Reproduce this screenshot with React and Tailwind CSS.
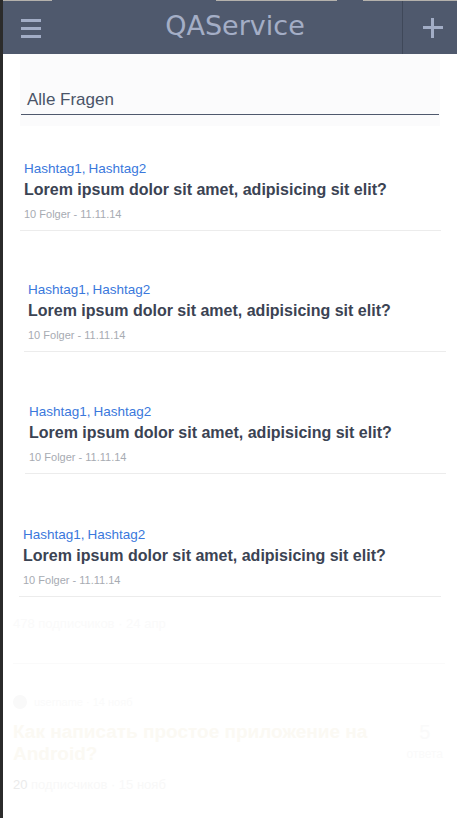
import React from "react";

const cards = [
  { wrap: "mt-[35px] ml-[17px] w-[421px]" },
  { wrap: "mt-[51px] ml-[21px] w-[422px]" },
  { wrap: "mt-[52px] ml-[22px] w-[421px]" },
  { wrap: "mt-[53px] ml-[16px] w-[422px]" },
];

function Card({ wrap }) {
  return (
    <div className={`${wrap} border-b border-[#ececec] pb-[9px] pl-[4px]`}>
      <div className="h-[16px] text-[13.5px] leading-[16px] text-[#3a78dc]">
        Hashtag1,<span className="ml-[3px]">Hashtag2</span>
      </div>
      <div className="mt-[3px] h-[20px] whitespace-nowrap text-[16px] font-bold leading-[20px] text-[#3b4353]">
        Lorem ipsum dolor sit amet, adipisicing sit elit?
      </div>
      <div className="mt-[7px] h-[14px] text-[11px] leading-[14px] text-[#a7abb2]">
        10 Folger - 11.11.14
      </div>
    </div>
  );
}

export default function App() {
  return (
    <div className="relative h-[818px] w-[457px] overflow-hidden border-l-[3px] border-[#2b2b2b] bg-white font-['Liberation_Sans',Arial,sans-serif]">
      <header className="flex h-[54px] flex-col bg-[#4f596d]">
        <div className="flex h-px">
          <span className="w-[49px] bg-[#b4b1ac]" />
          <span className="w-[164px]" />
          <span className="w-[121px] bg-[#b4b1ac]" />
          <span className="w-[26px]" />
          <span className="flex-1 bg-[#b4b1ac]" />
        </div>
        <div className="grid h-[53px] grid-cols-[54px_1fr_55px]">
          <div className="pl-[18px] pt-[18px]">
            <svg width="20" height="19" viewBox="0 0 20 19" fill="#a2adc6">
              <rect x="0" y="0" width="20" height="3" />
              <rect x="0" y="8" width="20" height="3" />
              <rect x="0" y="16" width="20" height="3" />
            </svg>
          </div>
          <div className="pl-[11px] pt-[9px] text-center font-['DejaVu_Sans',sans-serif] text-[27px] leading-[32px] text-[#a4aec6]">
            QAService
          </div>
          <div className="border-l border-[#3f4859] pl-[20px] pt-[17px]">
            <svg width="20" height="20" viewBox="0 0 20 20" fill="#a2adc6">
              <rect x="8" y="0" width="3" height="20" />
              <rect x="0" y="8" width="20" height="3" />
            </svg>
          </div>
        </div>
      </header>

      <div className="ml-[17px] h-[72px] w-[420px] bg-[#fbfbfc] pt-[36px]">
        <div className="mx-[1px] border-b border-[#4f596d] pb-[4px] pl-[6px] text-[17px] leading-[20px] text-[#4a5468]">
          Alle Fragen
        </div>
      </div>

      {cards.map((c, i) => (
        <Card key={i} wrap={c.wrap} />
      ))}

      <div className="ml-[10px] mt-[20px] text-[13px] leading-[14px] text-[#fafafa]">
        478 подписчиков · 24 апр
      </div>
      <div className="ml-[10px] mt-[32px] w-[432px] border-b border-[#fafafa]" />
      <div className="ml-[10px] mt-[30px] flex items-center gap-[7px] text-[11px] text-[#fafafa]">
        <span className="h-[14px] w-[14px] rounded-full bg-[#f9f9f9]" />
        <span>username · 14 нояб</span>
      </div>
      <div className="ml-[10px] mt-[10px] flex w-[432px] justify-between">
        <div className="whitespace-nowrap text-[19px] font-bold leading-[22px] text-[#fbf9f3]">
          Как написать простое приложение на
          <br />
          Android?
        </div>
        <div className="pr-[2px] text-center text-[12px] leading-[22px] text-[#fafafa]">
          <div className="text-[20px]">5</div>
          <div>ответа</div>
        </div>
      </div>
      <div className="ml-[10px] mt-[12px] text-[13px] leading-[16px] text-[#f8f8f8]">
        <span className="text-[#ebebeb]">20</span> подписчиков · 15 нояб
      </div>
    </div>
  );
}
